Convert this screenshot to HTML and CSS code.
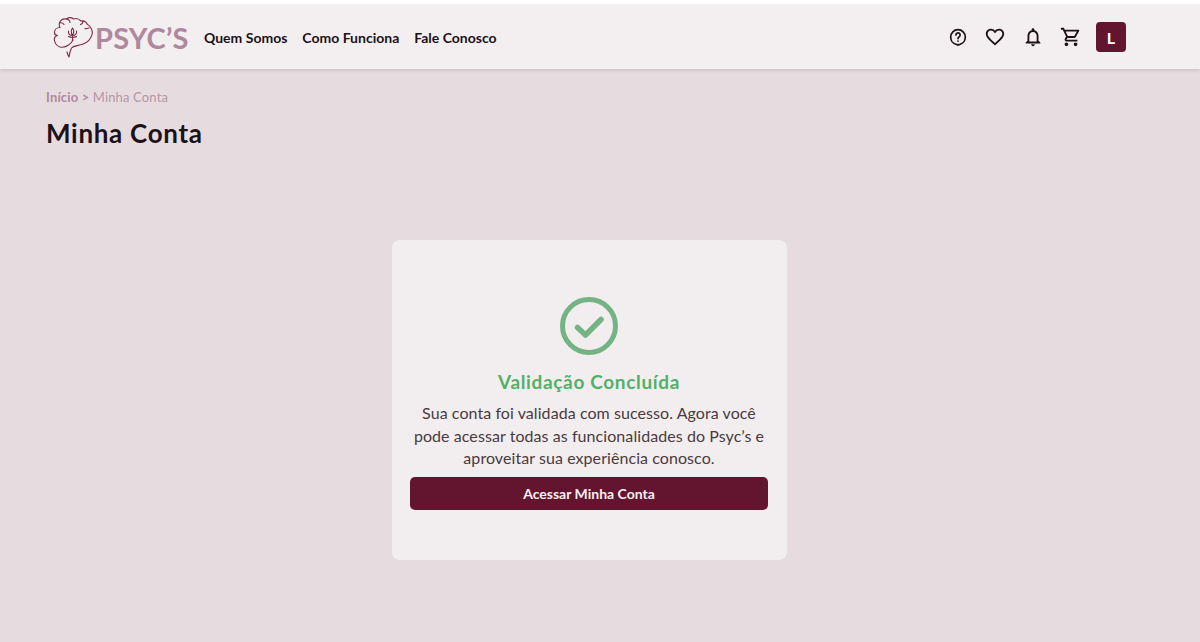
FILE: index.html
```html
<!DOCTYPE html>
<html lang="pt-BR">
<head>
    <meta charset="UTF-8">
    <meta name="viewport" content="width=device-width, initial-scale=1.0">
    <title>Minha Conta</title>
    <link rel="stylesheet" href="styles.css">
</head>
<body>
    <header class="topbar">
        <div class="topbar-left">
            <a class="logo" href="#">
                <svg class="logo-mark" width="42" height="42" viewBox="0 0 42 42" fill="none" stroke="#7d2a48" stroke-width="1.1" stroke-linecap="round" stroke-linejoin="round">
                    <path d="M15 36c.5 2 1 3.500 2 5 .5-3 1-6 2.500-9 2-2.500 6-2 10-3.500 4-1 7-3 9-6.500 2-3 2.500-6 1-9-1.500-2-2-4-4-4.500-1.500-3-4-4-6.500-3.500C27 3 24 2 21.500 3c-2-1.500-5-1.500-7 0-3-.5-6 1-7 4-.5 2-.5 3 .5 4.500-3 0-5.500 2-5.500 5 0 2 1.500 3 3 3"/>
                    <path d="M5 19.500c-2 1-3 3-2.500 5 .5 3 2.500 5.500 5.500 6.500 3 .5 6 0 8.500-2 2-1 3.500-3 4.500-5"/>
                    <path d="M7.500 7c2-.5 3.500 0 4.500 1.500M14.500 3c2 .5 3.500 2 3.500 3.500M31 5c0 1.500-1 3-2.500 3.500M37 12c-1.500.5-3 1-4 .5"/>
                    <path d="M20.500 12c-1.500 2-1.500 5 0 7.500 1.500-2.500 1.500-5.500 0-7.500zM16.500 15c-.5 3 1 4.500 4 4.500M24.500 15c.5 3-1 4.500-4 4.500M16.500 20.500c1.500 1 6.500 1 8 0M20.500 19.500v5"/>
                </svg>
                <span class="logo-text">PSYC’S</span>
            </a>
            <nav class="nav">
                <a href="#">Quem Somos</a>
                <a href="#">Como Funciona</a>
                <a href="#">Fale Conosco</a>
            </nav>
        </div>
        <div class="topbar-right">
            <svg class="icon" width="22" height="22" viewBox="0 0 22 22" fill="none" stroke="#1c1216" stroke-width="1.700" stroke-linecap="round" stroke-linejoin="round">
                <path d="M12 19.200c-.6-.5-1-.8-1.800-.9C7 17.800 4.700 14.700 4.700 11a7.300 7.300 0 1 1 14.600 0c0 3.700-2.300 6.800-5.500 7.300-.8.100-1.200.4-1.800.9z"/>
                <path d="M9.900 9a2.100 2.100 0 1 1 3.300 1.700c-.8.500-1.200 1-1.200 1.900"/>
                <path d="M12 15v.1"/>
            </svg>
            <svg class="icon" width="22" height="22" viewBox="0 0 24 24" fill="#1c1216">
                <path d="M16.500 3c-1.740 0-3.410.81-4.500 2.090C10.910 3.810 9.240 3 7.500 3 4.420 3 2 5.420 2 8.500c0 3.780 3.400 6.860 8.550 11.540L12 21.350l1.450-1.320C18.600 15.360 22 12.280 22 8.500 22 5.420 19.580 3 16.500 3zm-4.400 15.550l-.1.100-.1-.1C7.140 14.240 4 11.390 4 8.500 4 6.500 5.500 5 7.500 5c1.540 0 3.040.99 3.570 2.360h1.870C13.460 5.990 14.960 5 16.500 5c2 0 3.500 1.500 3.500 3.500 0 2.890-3.140 5.740-7.900 10.050z"/>
            </svg>
            <svg class="icon" width="22" height="22" viewBox="0 0 24 24" fill="#1c1216">
                <path d="M12 22c1.100 0 2-.9 2-2h-4c0 1.100.9 2 2 2zm6-6v-5c0-3.070-1.630-5.640-4.500-6.320V4c0-.83-.67-1.500-1.500-1.500s-1.500.67-1.500 1.500v.68C7.640 5.360 6 7.920 6 11v5l-2 2v1h16v-1l-2-2zm-2 1H8v-6c0-2.480 1.510-4.500 4-4.500s4 2.020 4 4.500v6z"/>
            </svg>
            <svg class="icon" width="22" height="22" viewBox="0 0 24 24" fill="#1c1216">
                <path d="M15.550 13c.75 0 1.410-.41 1.750-1.030l3.580-6.490A.996.996 0 0 0 20.010 4H5.210l-.94-2H1v2h2l3.600 7.590-1.350 2.440C4.520 15.370 5.480 17 7 17h12v-2H7l1.100-2h7.450zM6.160 6h12.150l-2.760 5H8.530L6.160 6zM7 18c-1.100 0-1.990.9-1.990 2S5.900 22 7 22s2-.9 2-2-.9-2-2-2zm10 0c-1.100 0-1.990.9-1.990 2s.89 2 1.990 2 2-.9 2-2-.9-2-2-2z"/>
            </svg>
            <div class="avatar">L</div>
        </div>
    </header>

    <main class="content">
        <div class="breadcrumb"><b>Início &gt;</b> Minha Conta</div>
        <h1 class="page-title">Minha Conta</h1>

        <div class="card-wrap">
            <section class="card">
                <svg class="check" width="58" height="58" viewBox="0 0 58 58" fill="none" stroke="#74b384" stroke-width="5" stroke-linecap="round" stroke-linejoin="round">
                    <circle cx="29" cy="29" r="26.500"/>
                    <path d="M17.500 30.500 25.500 38 41 22.500" stroke-width="5.500"/>
                </svg>
                <h2 class="card-title">Validação Concluída</h2>
                <p class="card-text">Sua conta foi validada com sucesso. Agora você pode acessar todas as funcionalidades do Psyc’s e aproveitar sua experiência conosco.</p>
                <button class="card-btn">Acessar Minha Conta</button>
            </section>
        </div>
    </main>
</body>
</html>
```

FILE: styles.css
```css
* { box-sizing: border-box; }
html, body { height: 100%; }
body { margin: 0; font-family: Lato, "Open Sans", sans-serif; background-color: #e6dce0; color: #1c1216; overflow: hidden; }
a { color: inherit; text-decoration: none; }

.topbar { height: 69px; background: #f3eff1; border-top: 4px solid #fff; box-shadow: 0 1px 4px rgba(0, 0, 0, 0.16); display: flex; align-items: center; justify-content: space-between; padding: 1px 74px 0 52px; }
.topbar-left { display: flex; align-items: center; }
.logo { display: flex; align-items: center; }
.logo-mark { display: block; }
.logo-text { font-size: 29px; font-weight: 700; color: #b0889c; letter-spacing: 0.2px; margin-left: 1px; width: 93px; }
.nav { display: flex; gap: 15px; margin-left: 16px; font-size: 14px; font-weight: 700; color: #1c1216; }
.topbar-right { display: flex; align-items: center; gap: 16px; }
.icon { display: block; flex: none; }
.avatar { width: 30px; height: 30px; margin-left: -2px; border-radius: 4px; background: #63152f; color: #fff; font-size: 16px; font-weight: 700; display: flex; align-items: center; justify-content: center; }

.content { padding: 19px 46px 0; }
.breadcrumb { font-size: 13px; color: #b596a5; line-height: 18px; letter-spacing: 0.15px; }
.breadcrumb b { color: #b0889c; }
.page-title { margin: 11px 0 0; font-size: 26px; font-weight: 700; line-height: 32px; color: #1c1216; letter-spacing: 0.7px; }

.card-wrap { display: flex; justify-content: center; padding: 91px 21px 0 0; }
.card { width: 395px; height: 320px; background: #f2eef0; border-radius: 8px; padding: 57px 19px 0 18px; display: flex; flex-direction: column; align-items: center; }
.check { display: block; flex: none; }
.card-title { margin: 15px 0 0; font-size: 19px; font-weight: 700; line-height: 24px; color: #52b068; letter-spacing: 0.65px; }
.card-text { margin: 8px 0 0; font-size: 16px; line-height: 22.500px; letter-spacing: 0.07px; text-align: center; color: #4a3a40; }
.card-btn { margin-top: 7px; width: 100%; height: 33px; flex: none; border: none; border-radius: 5px; background: #63152f; color: #f7eff2; font-family: inherit; font-size: 14px; font-weight: 700; cursor: pointer; }
```
